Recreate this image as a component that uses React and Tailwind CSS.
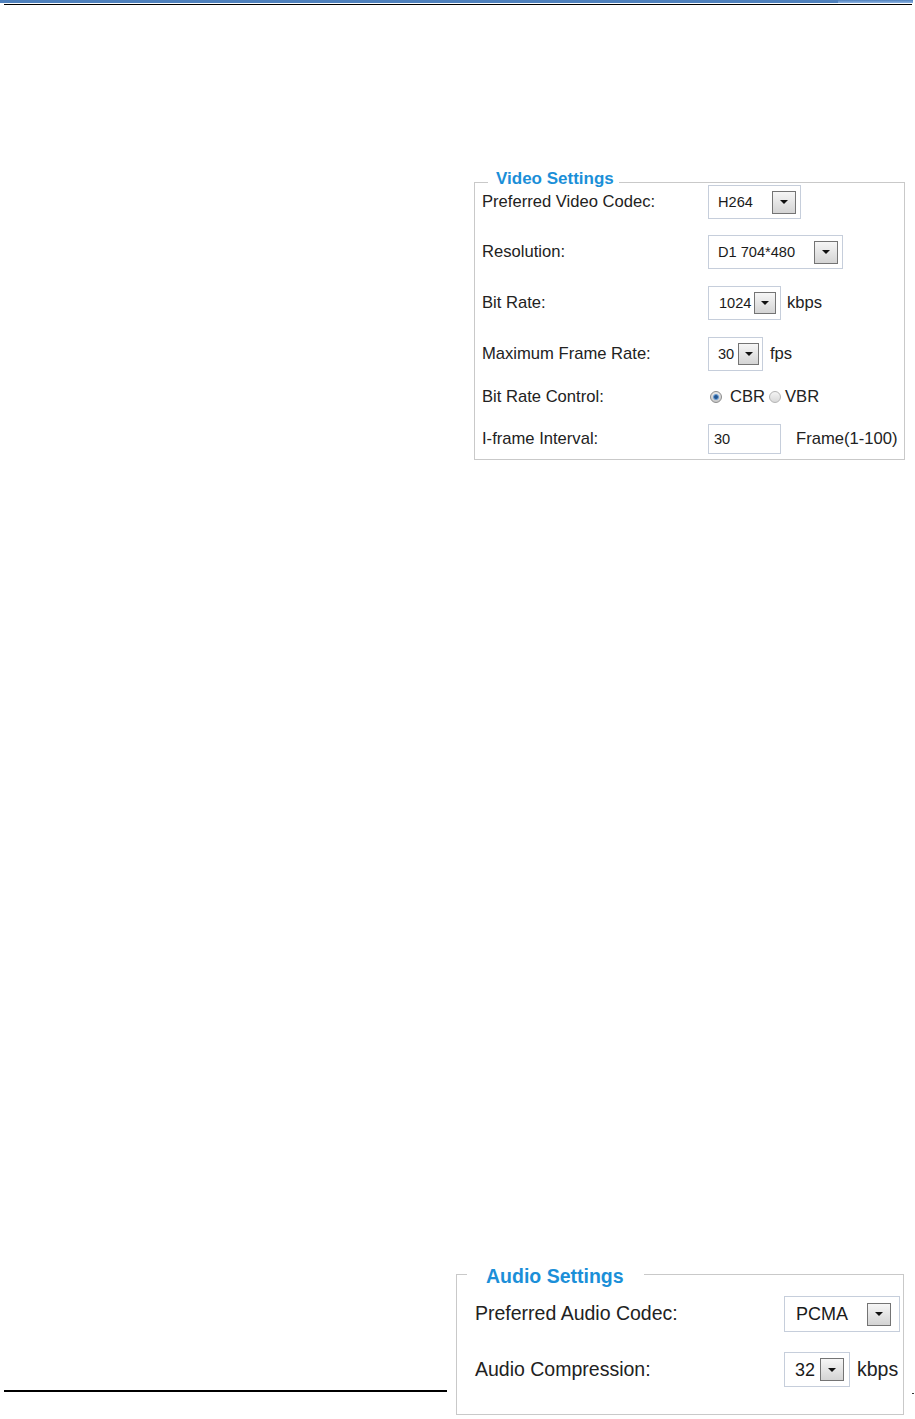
import React from "react";

function Arrow({ w = "w-[22px]", h = "h-[23px]" }) {
  return (
    <div className={`${w} ${h} shrink-0 border border-[#747474] bg-gradient-to-b from-[#f6f6f6] to-[#d4d4d4] flex items-center justify-center`}>
      <div className="w-0 h-0 border-l-[4px] border-r-[4px] border-t-[4px] border-l-transparent border-r-transparent border-t-[#111]" />
    </div>
  );
}

function Select({ value, boxW, boxH = "h-[34px]", text = "text-[14.6px]", pl = "pl-[9px]", pr = "pr-[4px]", arrowW, arrowH }) {
  return (
    <div className={`${boxW} ${boxH} ${pl} ${pr} border border-[#c6cedb] bg-white flex items-center justify-between`}>
      <span className={`${text} text-[#1a1a1a] leading-none`}>{value}</span>
      <Arrow w={arrowW} h={arrowH} />
    </div>
  );
}

function Radio({ checked }) {
  return checked ? (
    <div className="w-[12px] h-[12px] rounded-full border border-[#8c8c8c] bg-gradient-to-b from-[#e8e8e8] to-[#c8c8c8] flex items-center justify-center">
      <div className="w-[6px] h-[6px] rounded-full bg-[#23548f] border border-[#6aa0d8]" />
    </div>
  ) : (
    <div className="w-[12px] h-[12px] rounded-full border border-[#b4b4b4] bg-gradient-to-b from-[#f4f4f4] to-[#d9d9d9]" />
  );
}

function VRow({ label, mt, h = "h-[34px]", children }) {
  return (
    <div className={`flex items-center ${mt} ${h}`}>
      <div className="w-[226px] text-[16.6px] text-[#222] leading-none">{label}</div>
      <div className="flex items-center">{children}</div>
    </div>
  );
}

function ARow({ label, mt, h, children }) {
  return (
    <div className={`flex items-center ${mt} ${h}`}>
      <div className="w-[309px] text-[19.5px] text-[#222] leading-none">{label}</div>
      <div className="flex items-center">{children}</div>
    </div>
  );
}

export default function App() {
  return (
    <div className="w-[915px] h-[1419px] bg-white overflow-hidden font-['Liberation_Sans',Arial,sans-serif]">
      {/* header rule */}
      <div className="flex h-[3px] w-[913px]">
        <div className="flex-1 bg-[#4f81bd]" />
        <div className="w-[75px] bg-gradient-to-b from-[#4f81bd] to-[#8db3e2]" />
      </div>
      <div className="mt-[1px] ml-[4px] w-[908px] h-[1px] bg-black" />

      {/* Video settings */}
      <div className="relative mt-[177px] ml-[474px] w-[431px] h-[278px] border border-[#c9c9c9] pl-[7px]">
        <span className="absolute left-[13px] -top-[13px] bg-white pl-[8px] pr-[5px] text-[17px] leading-[17px] font-bold text-[#1b8fd8]">
          Video Settings
        </span>
        <VRow label="Preferred Video Codec:" mt="mt-[2px]">
          <Select value="H264" boxW="w-[93px]" arrowW="w-[24px]" />
        </VRow>
        <VRow label="Resolution:" mt="mt-[16px]">
          <Select value="D1 704*480" boxW="w-[135px]" arrowW="w-[24px]" h="h-[24px]" />
        </VRow>
        <VRow label="Bit Rate:" mt="mt-[17px]">
          <Select value="1024" boxW="w-[73px]" pl="pl-[10px]" pr="pr-[4px]" arrowW="w-[22px]" arrowH="h-[22px]" />
          <span className="ml-[6px] text-[16.6px] text-[#222] leading-none">kbps</span>
        </VRow>
        <VRow label="Maximum Frame Rate:" mt="mt-[17px]">
          <Select value="30" boxW="w-[55px]" pl="pl-[9px]" pr="pr-[3px]" arrowW="w-[21px]" arrowH="h-[22px]" />
          <span className="ml-[7px] text-[16.6px] text-[#222] leading-none">fps</span>
        </VRow>
        <VRow label="Bit Rate Control:" mt="mt-[9px]">
          <div className="ml-[2px]"><Radio checked /></div>
          <span className="ml-[8px] text-[16.6px] text-[#222] leading-none">CBR</span>
          <div className="ml-[4px]"><Radio /></div>
          <span className="ml-[4px] text-[16.6px] text-[#222] leading-none">VBR</span>
        </VRow>
        <VRow label="I-frame Interval:" mt="mt-[9px]" h="h-[32px]">
          <div className="w-[73px] h-[30px] border border-[#c6cedb] bg-white flex items-center pl-[5px]">
            <span className="text-[14.6px] text-[#1a1a1a] leading-none">30</span>
          </div>
          <span className="ml-[15px] text-[16.6px] text-[#222] leading-none">Frame(1-100)</span>
        </VRow>
      </div>

      {/* bottom area */}
      <div className="flex items-start mt-[814px]">
        <div className="w-[456px] pt-[116px] pl-[4px]">
          <div className="w-[443px] h-[2px] bg-black" />
        </div>
        <div className="relative w-[448px] h-[141px] border border-[#c9c9c9] pl-[18px]">
          <span className="absolute left-[10px] -top-[9px] bg-white pl-[19px] pr-[20px] text-[19.5px] leading-[20px] font-bold text-[#1b8fd8]">
            Audio Settings
          </span>
          <ARow label="Preferred Audio Codec:" mt="mt-[21px]" h="h-[36px]">
            <Select value="PCMA" boxW="w-[116px]" boxH="h-[36px]" text="text-[18px]" pl="pl-[11px]" pr="pr-[8px]" arrowW="w-[24px]" arrowH="h-[23px]" />
          </ARow>
          <ARow label="Audio Compression:" mt="mt-[20px]" h="h-[35px]">
            <Select value="32" boxW="w-[66px]" boxH="h-[35px]" text="text-[18px]" pl="pl-[10px]" pr="pr-[5px]" arrowW="w-[24px]" arrowH="h-[23px]" />
            <span className="ml-[7px] text-[19.5px] text-[#222] leading-none">kbps</span>
          </ARow>
        </div>
        <div className="ml-[8px] mt-[119px] w-[2px] h-[1px] bg-[#333]" />
      </div>
    </div>
  );
}
